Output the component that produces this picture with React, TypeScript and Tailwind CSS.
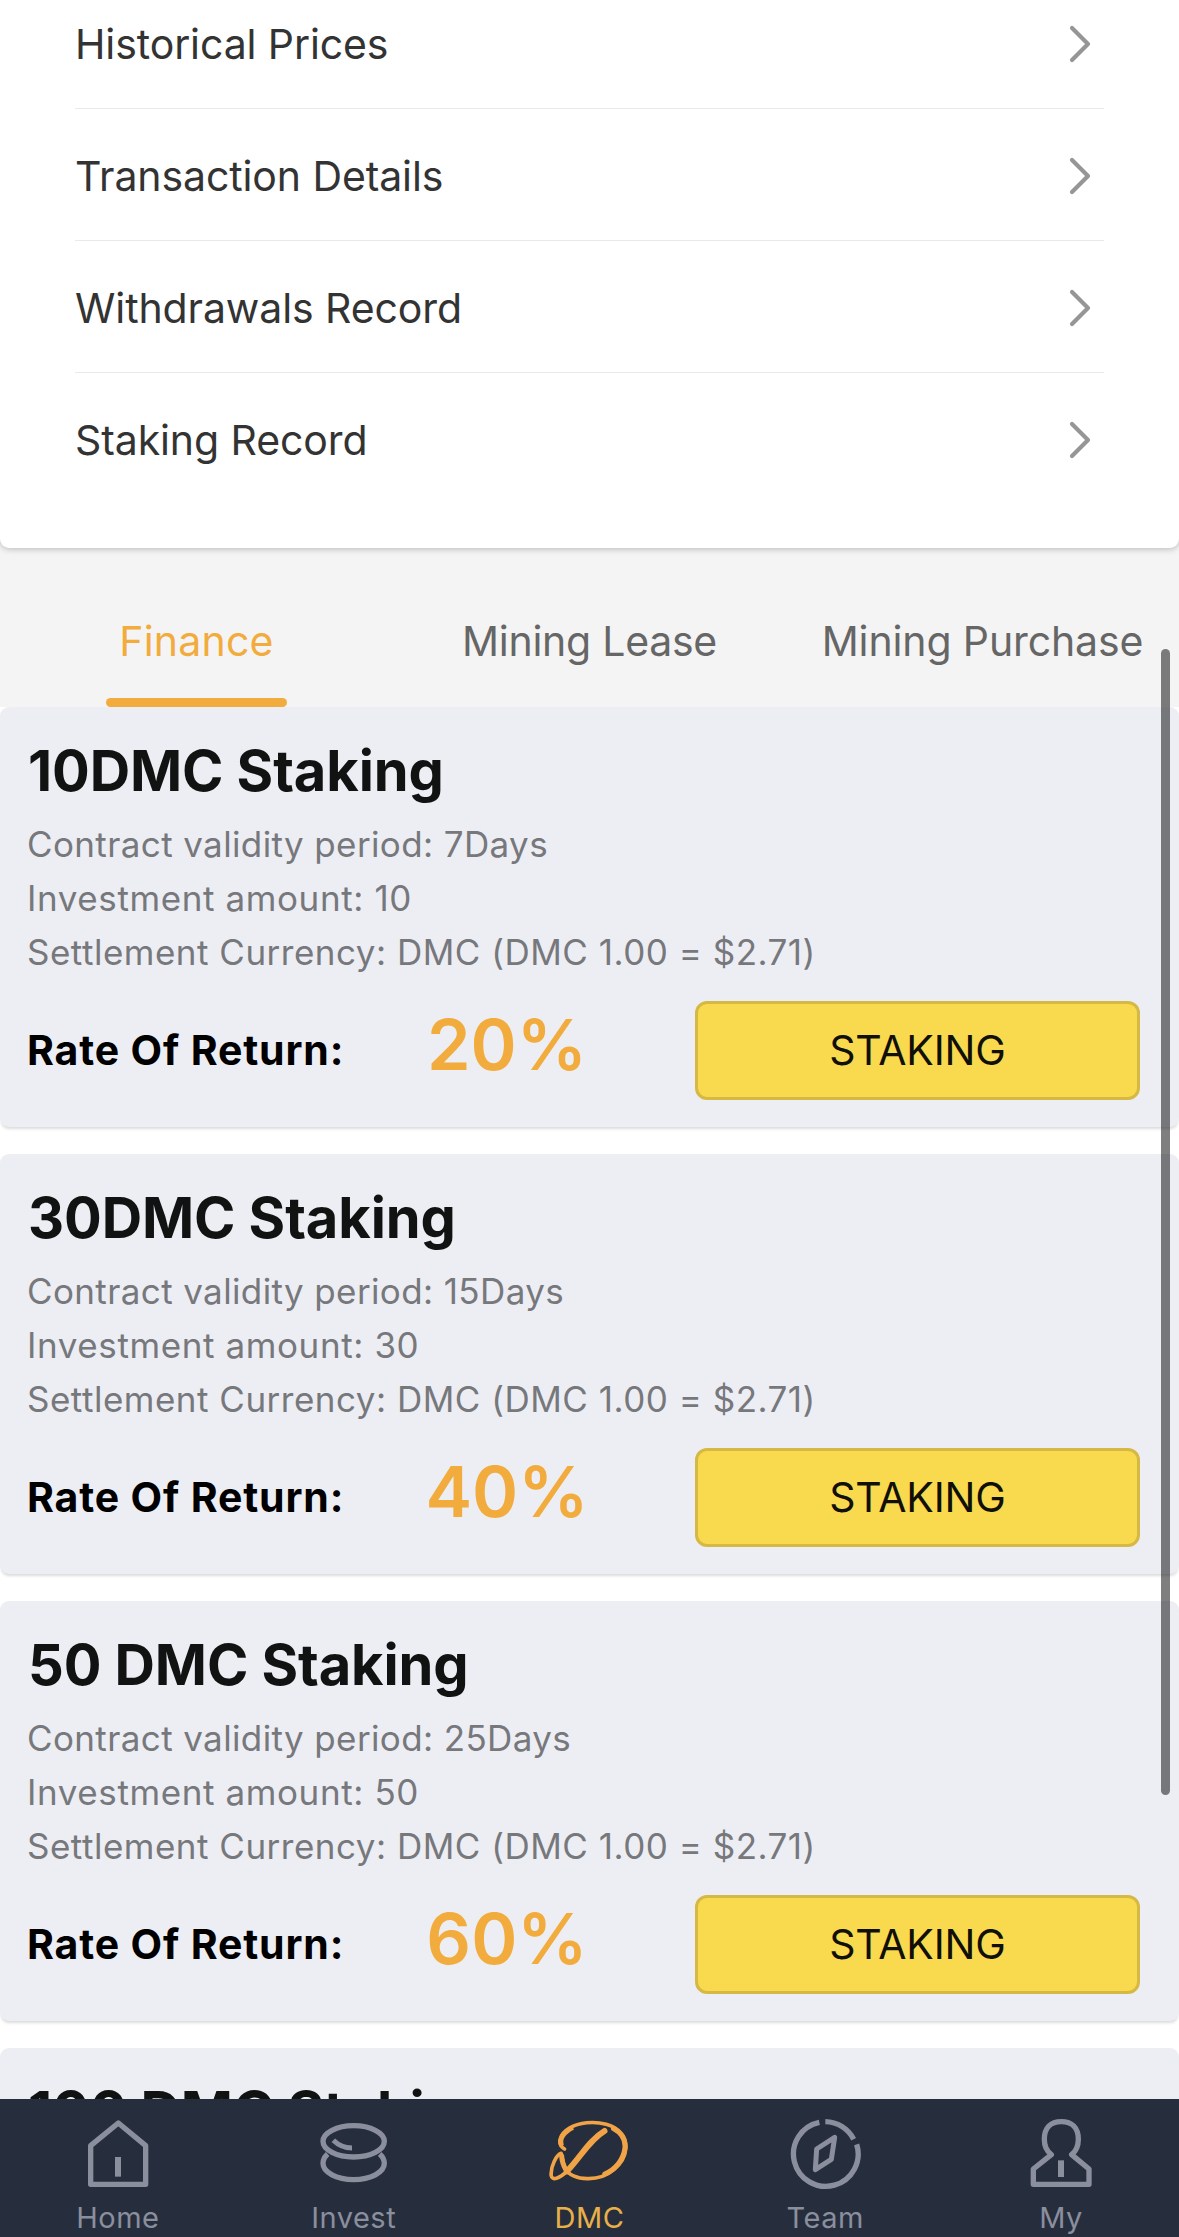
import type { ReactNode } from 'react';

const records = ['Historical Prices', 'Transaction Details', 'Withdrawals Record', 'Staking Record'];

const tabs = [
  { label: 'Finance', style: 'tracking-[0.2px] text-[#f2ac3e]' },
  { label: 'Mining Lease', style: 'tracking-[-0.25px] text-[#666666]' },
  { label: 'Mining Purchase', style: 'tracking-[-0.12px] text-[#666666]' },
];

type Plan = {
  title: string;
  details?: { days: string; amount: string; rate: string };
};

const plans: Plan[] = [
  { title: '10DMC Staking', details: { days: '7Days', amount: '10', rate: '20%' } },
  { title: '30DMC Staking', details: { days: '15Days', amount: '30', rate: '40%' } },
  { title: '50 DMC Staking', details: { days: '25Days', amount: '50', rate: '60%' } },
  { title: '100 DMC Staking' },
];

function Icon({ children }: { children: ReactNode }) {
  return (
    <svg
      className="h-[80px] w-[80px] shrink-0"
      viewBox="0 0 240 240"
      fill="none"
      stroke="currentColor"
      strokeWidth={16}
      strokeLinejoin="round"
    >
      {children}
    </svg>
  );
}

const HomeIcon = () => (
  <Icon>
    <path d="M121 39 L203 107 V223 H38 V107 Z" />
    <path d="M120 141 V200" strokeWidth={18} />
  </Icon>
);

const InvestIcon = () => (
  <Icon>
    <ellipse cx="119" cy="94" rx="92" ry="47" />
    <path d="M41 132 C32 140 27 150 27 160 C27 187 68 209 119 209 S211 187 211 160 C211 150 206 140 197 132" />
    <path d="M58 91 C72 105 92 114 114 114" strokeWidth={15} />
  </Icon>
);

const DmcIcon = () => (
  <Icon>
    <g transform="translate(-28.5 0)" stroke="#f0a347" strokeLinecap="round">
      <path
        d="M75 117 C52 103 58 73 90 54 C118 37 164 33 200 43 C242 54 262 84 259 116 C255 162 208 205 147 206 C112 207 86 194 76 174 C69 160 70 142 65 130 C51 134 33 169 35 196 C37 214 60 205 82 184 C121 145 152 88 196 61"
        strokeWidth={11}
      />
      <path d="M66 107 C58 86 74 66 100 52" strokeWidth={15} strokeLinecap="butt" />
      <path d="M222 56 C248 70 259 92 256 116 C252 148 229 178 196 192" strokeWidth={15} />
      <path d="M82 184 C121 145 148 91 195 63" strokeWidth={18} />
      <path d="M66 134 C67 150 70 166 80 180" strokeWidth={15} strokeLinecap="butt" />
    </g>
  </Icon>
);

const TeamIcon = () => (
  <Icon>
    <g transform="translate(-16 -15)">
      <path d="M231 118 A97 97 0 1 1 119 52" />
      <path d="M137 50 A97 97 0 0 1 222 103" />
      <path d="M165 97 L155 163 L107 194 L111 132 Z" strokeWidth={15} />
    </g>
  </Icon>
);

const MyIcon = () => (
  <Icon>
    <g transform="translate(-723 -210)">
      <path d="M814 344 C799 333 793 315 793 298 C793 263 812 245 844 245 C876 245 895 263 895 298 C895 315 889 333 875 344 L927 387 V433 H760 V387 Z" />
      <path d="M843 361 V411" strokeWidth={18} />
    </g>
  </Icon>
);

const navItems = [
  { label: 'Home', icon: <HomeIcon /> },
  { label: 'Invest', icon: <InvestIcon /> },
  { label: 'DMC', icon: <DmcIcon /> },
  { label: 'Team', icon: <TeamIcon /> },
  { label: 'My', icon: <MyIcon /> },
];

function PlanCard({ title, details }: Plan) {
  return (
    <article className="h-[420px] shrink-0 rounded-[9px] bg-[#edeef4] px-[27px] pt-[19px] shadow-[0_3px_3px_-1px_rgba(0,0,0,0.14)]">
      <h2 className="h-[91px] pl-px text-[56px] leading-[90px] font-bold tracking-[-0.1px] text-[#111312]">
        {title}
      </h2>
      {details && (
        <>
          <div className="text-[35px] leading-[54px] text-[#77787c]">
            <p className="tracking-[0.38px]">Contract validity period: {details.days}</p>
            <p className="tracking-[0.6px]">Investment amount: {details.amount}</p>
            <p className="tracking-[0.5px]">Settlement Currency: DMC (DMC 1.00 = $2.71)</p>
          </div>
          <div className="mt-[22px] flex h-[99px] items-center">
            <span className="w-[358px] pt-px text-[41px] font-bold tracking-[0.85px] text-black">
              Rate Of Return:
            </span>
            <span className="w-[244px] pb-[11px] text-center text-[70px] leading-[88px] font-semibold text-[#f2ac3e]">
              {details.rate}
            </span>
            <button className="ml-[66px] h-[99px] w-[445px] shrink-0 rounded-[12px] border-[3px] border-[#d5b944] bg-[#f9da4f] pt-px text-[41px] tracking-[-0.15px] text-[#111008]">
              STAKING
            </button>
          </div>
        </>
      )}
    </article>
  );
}

export default function App() {
  return (
    <div className="relative flex h-[2237px] w-[1179px] flex-col overflow-hidden bg-white font-['Inter',sans-serif]">
      <div className="flex h-[2099px] shrink-0 flex-col overflow-hidden">
        <div className="shrink-0 bg-[#f4f4f4]">
          <section className="h-[548px] overflow-hidden rounded-b-[9px] bg-white px-[75px] shadow-[0_1px_6px_rgba(0,0,0,0.25)]">
            <ul className="-mt-[23px]">
              {records.map((name) => (
                <li
                  key={name}
                  className="flex h-[132px] items-center justify-between border-b border-[#e9e9e9] pt-[3px] pr-[13px] last:border-transparent"
                >
                  <span className="pt-[2px] text-[41px] tracking-[-0.1px] text-[#333333]">{name}</span>
                  <svg className="h-[40px] w-[24px]" viewBox="0 0 24 40" fill="none">
                    <path
                      d="M5 4 L21 20 L5 36"
                      stroke="#969697"
                      strokeWidth="4.2"
                      strokeLinecap="round"
                      strokeLinejoin="round"
                    />
                  </svg>
                </li>
              ))}
            </ul>
          </section>
          <nav className="grid h-[159px] grid-cols-3">
            {tabs.map(({ label, style }, i) => (
              <div key={label} className="flex flex-col items-center justify-between pt-[63px]">
                <span className={`text-[41px] leading-[60px] whitespace-nowrap ${style}`}>{label}</span>
                {i === 0 && <span className="h-[9px] w-[181px] rounded-full bg-[#f2ac3e]" />}
              </div>
            ))}
          </nav>
        </div>
        <main className="flex flex-col gap-[27px]">
          {plans.map((plan) => (
            <PlanCard key={plan.title} {...plan} />
          ))}
        </main>
      </div>
      <footer className="grid h-[138px] shrink-0 grid-cols-5 bg-[#262e3d] pt-[11px]">
        {navItems.map(({ label, icon }) => (
          <div
            key={label}
            className={
              label === 'DMC'
                ? 'flex flex-col items-center text-[#e9b04a]'
                : 'flex flex-col items-center text-[#8b8e9d]'
            }
          >
            {icon}
            <span className="mt-[8px] text-[29px] leading-[39px] tracking-[0.5px]">{label}</span>
          </div>
        ))}
      </footer>
      <div className="absolute top-[649px] right-[9px] h-[1146px] w-[9px] rounded-full bg-black/50" />
    </div>
  );
}
